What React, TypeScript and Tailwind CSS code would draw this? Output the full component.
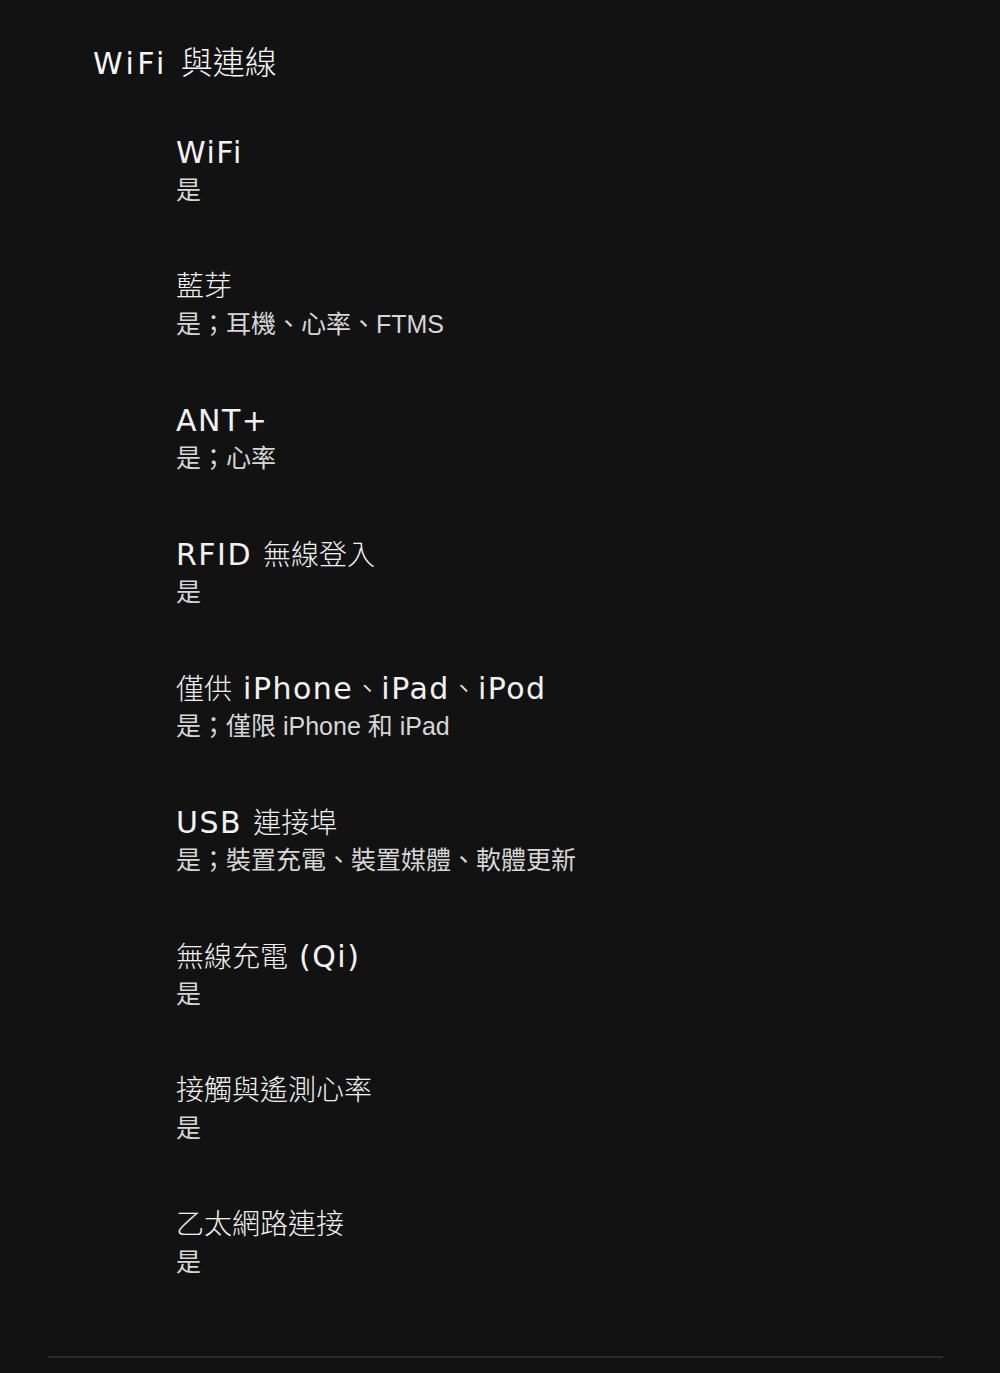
const ITEMS = [
  { title: 'WiFi', value: '是' },
  { title: '藍芽', value: '是；耳機、心率、FTMS' },
  { title: 'ANT+', value: '是；心率' },
  { title: 'RFID 無線登入', value: '是' },
  { title: '僅供 iPhone、iPad、iPod', value: '是；僅限 iPhone 和 iPad' },
  { title: 'USB 連接埠', value: '是；裝置充電、裝置媒體、軟體更新' },
  { title: '無線充電 (Qi)', value: '是' },
  { title: '接觸與遙測心率', value: '是' },
  { title: '乙太網路連接', value: '是' },
]

const LATIN = /^[A-Za-z0-9+() ]+$/

// Latin runs get the wide tracked face, CJK runs stay light and untracked
function Display({ text, wide }: { text: string; wide?: boolean }) {
  const parts = text.split(/([A-Za-z0-9+() ]+)/).filter(Boolean)
  return (
    <>
      {parts.map((p, i) =>
        LATIN.test(p) ? (
          <span
            key={i}
            className={wide ? 'text-[30px] font-normal tracking-[3.5px]' : 'text-[30px] font-normal tracking-[1.5px]'}
          >
            {p}
          </span>
        ) : (
          <span key={i} className="font-light">{p}</span>
        )
      )}
    </>
  )
}

const display = "font-['DejaVu_Sans','Noto_Sans_CJK_TC',sans-serif]"
const body = "font-['Liberation_Sans','Noto_Sans_CJK_TC',sans-serif]"

export default function App() {
  return (
    <div className="min-h-[1373px] bg-[#121212] pl-[48px] pr-[57px]">
      <section className="pt-[43px]">
        <h2 className={`${display} h-[40px] pl-[45px] text-[32px] leading-[40px] text-[#f7f7f7]`}>
          <Display text="WiFi 與連線" wide />
        </h2>

        <dl className="mt-[52px] flex flex-col gap-[61px] pl-[128px]">
          {ITEMS.map((item) => (
            <div key={item.title}>
              <dt className={`${display} h-[36px] text-[28px] leading-[36px] text-[#f2f2f2]`}>
                <Display text={item.title} />
              </dt>
              <dd className={`${body} mt-[1px] h-[36px] text-[25px] leading-[36px] text-[#d6d6d6]`}>{item.value}</dd>
            </div>
          ))}
        </dl>
      </section>

      <div className="mt-[76px] h-[2px] bg-[#2a2a2a]" />
    </div>
  )
}
